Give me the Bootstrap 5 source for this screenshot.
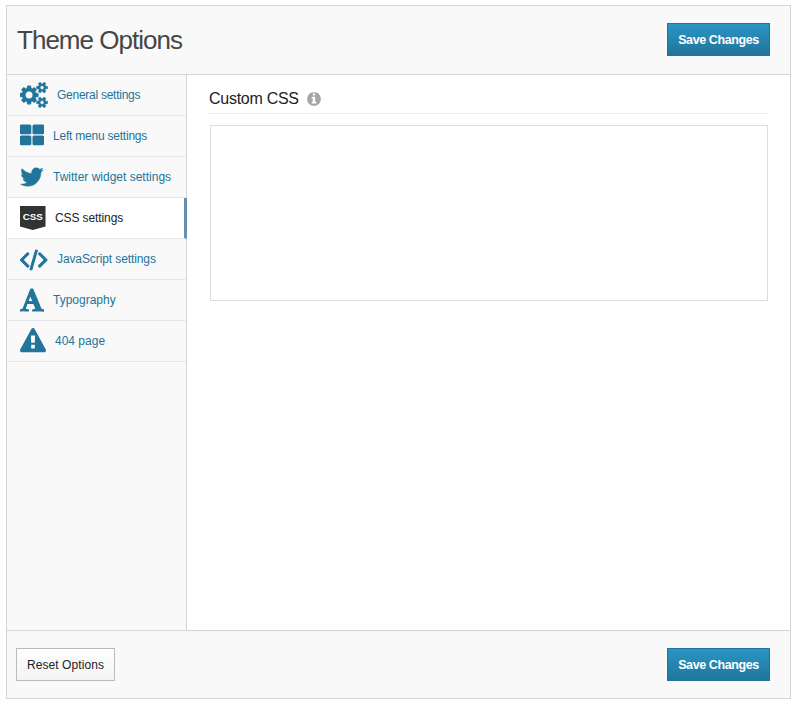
<!DOCTYPE html>
<html lang="en">
<head>
<meta charset="utf-8">
<meta name="viewport" content="width=device-width, initial-scale=1">
<title>Theme Options</title>
<link href="https://cdn.jsdelivr.net/npm/bootstrap@5.3.0/dist/css/bootstrap.min.css" rel="stylesheet">
<style>
body{font-family:"Liberation Sans",Arial,sans-serif;font-size:12px;color:#333;background:#fff}
.options-panel{width:785px;height:694px;margin:5px 0 0 6px;border:1px solid #d5d5d5}
.panel-bar{background:#f9f9f9;padding:0 20px 0 9px}
.bar-top{height:69px;border-bottom:1px solid #d5d5d5;padding-bottom:1px}
.bar-bottom{height:68px;border-top:1px solid #d5d5d5}
.panel-title{font-size:26px;font-weight:400;letter-spacing:-.98px;color:#464646;padding:2px 0 0 1px}
.btn-square{height:33px;padding:1px 0 0;border-radius:0;font-size:12px;line-height:30px}
.btn-save{width:103px;color:#fff;font-size:12.5px;font-weight:700;letter-spacing:-.4px;background:linear-gradient(#2a95c5,#21759b);border-color:#21759b}
.btn-reset{width:99px;color:#222;letter-spacing:.08px;background:linear-gradient(#fefefe,#f4f4f4);border-color:#bbb}
.side{width:180px;background:#f9f9f9;border-right:1px solid #d5d5d5}
.side .nav-link{height:41px;padding:0 0 0 13px;gap:9px;color:#21759b;border-bottom:1px solid #e7e7e7;letter-spacing:-.1px}
.side .nav-link:nth-child(1){letter-spacing:-.26px}
.side .nav-link:nth-child(2){letter-spacing:-.22px}
.side .nav-link:nth-child(3),.side .nav-link:nth-child(6),.side .nav-link:nth-child(7){letter-spacing:0}
.side .nav-link svg{height:26px;fill:currentColor;flex:none}
.side .nav-link .bold-shape{stroke:currentColor;stroke-width:30}
.side .nav-link .bolder-shape{stroke:currentColor;stroke-width:76}
.side .nav-link.active{color:#222;background:#fff;margin-right:-1px;border-right:3px solid #6490b3}
.content-area{padding:0 22px}
.section-title{height:39px;font-size:16px;font-weight:400;letter-spacing:-.27px;color:#222;border-bottom:1px solid #ebebeb;padding-top:9px;gap:7px}
.css-box{height:176px;margin:11px 0 0 1px;width:558px;border:1px solid #ddd;border-radius:0;resize:none}
</style>
<script src="https://cdn.jsdelivr.net/npm/bootstrap@5.3.0/dist/js/bootstrap.bundle.min.js"></script>
</head>
<body>
<main class="options-panel d-flex flex-column">
  <header class="panel-bar bar-top d-flex align-items-center justify-content-between">
    <h1 class="panel-title mb-0">Theme Options</h1>
    <button class="btn btn-square btn-save" type="button">Save Changes</button>
  </header>
  <div class="d-flex flex-grow-1">
    <nav class="side nav flex-column flex-nowrap">
      <a class="nav-link d-flex align-items-center" href="#"><svg width="28" viewBox="20 0 1920 1792"><path class="bold-shape" d="M896 896q0-106-75-181t-181-75-181 75-75 181 75 181 181 75 181-75 75-181zm384-91v185q0 10-7 19.500t-16 10.500l-155 24q-11 35-32 76 34 48 90 115 7 11 7 20 0 12-7 19-23 30-82.500 89.500t-78.500 59.500q-11 0-21-7l-115-90q-37 19-77 31-11 108-23 155-7 24-30 24h-186q-11 0-20-7.500t-10-17.500l-23-153q-34-10-75-31l-118 89q-7 7-20 7-11 0-21-8-144-133-144-160 0-9 7-19 10-14 41-53t47-61q-23-44-35-82l-152-24q-10-1-17-9.500t-7-19.500v-185q0-10 7-19.500t16-10.500l155-24q11-35 32-76-34-48-90-115-7-11-7-20 0-12 7-20 22-30 82-89t79-59q11 0 21 7l115 90q34-18 77-32 11-108 23-154 7-24 30-24h186q11 0 20 7.500t10 17.500l23 153q34 10 75 31l118-89q8-7 20-7 11 0 21 8 144 133 144 160 0 8-7 19-12 16-42 54t-45 60q23 48 34 82l152 23q10 2 17 10.500t7 19.500z"/><g id="small-gear"><path d="M1664 1408a128 128 0 1 0-256 0a128 128 0 1 0 256 0zM1920 1338v140q0 16-149 31-12 27-30 52 51 113 51 138 0 4-4 7-122 71-124 71-8 0-46-47t-52-68q-20 2-30 2t-30-2q-14 21-52 68t-46 47q-2 0-124-71-4-3-4-7 0-25 51-138-18-25-30-52-149-15-149-31v-140q0-16 149-31 13-29 30-52-51-113-51-138 0-4 4-7 4-2 35-20t59-34 30-16q8 0 46 46.500t52 67.500q20-2 30-2t30 2q51-71 92-112l6-2q4 0 124 70 4 3 4 7 0 25-51 138 17 23 30 52 149 15 149 31z" fill-rule="evenodd" stroke="currentColor" stroke-width="30"/></g><use href="#small-gear" y="-1024"/></svg><span>General settings</span></a>
      <a class="nav-link d-flex align-items-center" href="#"><svg width="24" viewBox="64 0 1664 1792"><rect x="40" y="104" width="810" height="674" rx="110"/><rect x="930" y="104" width="810" height="674" rx="110"/><rect x="40" y="864" width="810" height="674" rx="110"/><rect x="930" y="864" width="810" height="674" rx="110"/></svg><span>Left menu settings</span></a>
      <a class="nav-link d-flex align-items-center" href="#"><svg width="24" viewBox="74 0 1664 1792"><path class="bold-shape" d="M1684 408q-67 98-162 167 1 14 1 42 0 130-38 259.500t-115.500 248.500-184.500 210.500-258 146-323 54.500q-271 0-496-145 35 4 78 4 225 0 401-138-105-2-188-64.500t-114-159.500q33 5 61 5 43 0 85-11-112-23-185.500-111.500t-73.500-205.500v-4q68 38 146 41-66-44-105-115t-39-154q0-88 44-163 121 149 294.500 238.500t371.500 99.500q-8-38-8-74 0-134 94.500-228.500t228.500-94.500q140 0 236 102 109-21 205-78-37 115-142 178 93-10 186-50z"/></svg><span>Twitter widget settings</span></a>
      <a class="nav-link active d-flex align-items-center" href="#"><svg width="26" viewBox="0 0 26 26"><path d="M0 1h25.500v20.500L12.800 25 0 21.500z" fill="#333"/><text x="12.800" y="14.700" text-anchor="middle" font-family="Liberation Sans" font-weight="700" font-size="9.500" letter-spacing="0" textLength="20" lengthAdjust="spacingAndGlyphs" fill="#fff">CSS</text></svg><span>CSS settings</span></a>
      <a class="nav-link d-flex align-items-center" href="#"><svg width="28" viewBox="84 0 1920 1792"><path class="bolder-shape" d="M681 1399l-50 50q-10 10-23 10t-23-10l-466-466q-10-10-10-23t10-23l466-466q10-10 23-10t23 10l50 50q10 10 10 23t-10 23l-393 393 393 393q10 10 10 23t-10 23zm591-1067l-373 1291q-4 13-15.500 19.500t-23.500 2.500l-62-17q-13-4-19.500-15.500t-2.500-24.500l373-1291q4-13 15.500-19.500t23.500-2.500l62 17q13 4 19.500 15.500t2.500 24.500zm657 651l-466 466q-10 10-23 10t-23-10l-50-50q-10-10-10-23t10-23l393-393-393-393q-10-10-10-23t10-23l50-50q10-10 23-10t23 10l466 466q10 10 10 23t-10 23z"/></svg><span>JavaScript settings</span></a>
      <a class="nav-link d-flex align-items-center" href="#"><svg width="24" viewBox="74 0 1664 1792"><path class="bolder-shape" d="M789 559l-170 450q33 0 136.500 2t160.500 2q19 0 57-2-87-253-184-452zm-725 1105l2-79q23-7 56-12.500t57-10.500 49.500-14.500 44.500-29 31-50.500l237-616 280-724h128q8 14 11 21l205 480q33 78 106 257.500t114 274.500q15 34 58 144.500t72 168.500q20 45 35 57 19 15 88 29.500t84 20.500q6 38 6 57 0 4-.500 13t-.500 13q-63 0-190-8t-191-8q-76 0-215 7t-178 8q0-43 4-78l131-28q1 0 12.500-2.500t15.500-3.500 14.500-4.500 15-6.500 11-8 9-11 2.500-14q0-16-31-96.500t-72-177.500-42-100l-450-2q-26 58-76.500 195.500t-50.500 162.500q0 22 14 37.500t43.500 24.500 48.500 13.500 57 8.500 41 4q1 19 1 58 0 9-2 27-58 0-174.500-10t-174.500-10q-8 0-26.500 4t-21.500 4q-80 14-188 14z"/></svg><span>Typography</span></a>
      <a class="nav-link d-flex align-items-center" href="#"><svg width="26" viewBox="0 0 1792 1792"><path d="M1024 1375v-190q0-14-9.500-23.500t-22.500-9.500h-192q-13 0-22.500 9.500t-9.500 23.500v190q0 14 9.500 23.500t22.500 9.500h192q13 0 22.500-9.500t9.500-23.500zm-2-374l18-459q0-12-10-19-13-11-24-11h-220q-11 0-24 11-10 7-10 21l17 457q0 10 10 16.500t24 6.500h185q14 0 23.500-6.500t10.500-16.500zm-14-934l768 1408q35 63-2 126-17 29-46.500 46t-63.500 17h-1536q-34 0-63.500-17t-46.500-46q-37-63-2-126l768-1408q17-31 47-49t65-18 65 18 47 49z"/></svg><span>404 page</span></a>
    </nav>
    <section class="content-area flex-grow-1">
      <h2 class="section-title d-flex align-items-center mb-0"><span>Custom CSS</span><svg width="16" height="16" viewBox="0 0 1792 1792" fill="#a5a5a5"><path d="M1152 1376v-160q0-14-9-23t-23-9h-96v-512q0-14-9-23t-23-9h-320q-14 0-23 9t-9 23v160q0 14 9 23t23 9h96v320h-96q-14 0-23 9t-9 23v160q0 14 9 23t23 9h448q14 0 23-9t9-23zm-128-896v-160q0-14-9-23t-23-9h-192q-14 0-23 9t-9 23v160q0 14 9 23t23 9h192q14 0 23-9t9-23zm640 416q0 209-103 385.500t-279.500 279.500-385.500 103-385.500-103-279.500-279.500-103-385.500 103-385.500 279.500-279.500 385.500-103 385.500 103 279.500 279.500 103 385.500z"/></svg></h2>
      <textarea class="css-box form-control" aria-label="Custom CSS"></textarea>
    </section>
  </div>
  <footer class="panel-bar bar-bottom d-flex align-items-center justify-content-between">
    <button class="btn btn-square btn-reset" type="button">Reset Options</button>
    <button class="btn btn-square btn-save" type="button">Save Changes</button>
  </footer>
</main>
</body>
</html>
